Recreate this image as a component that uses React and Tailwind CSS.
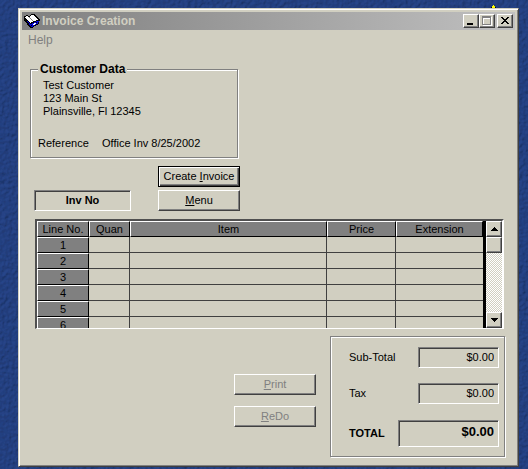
import clsx from 'clsx';

const rows = [1, 2, 3, 4, 5, 6];

const raised =
  'border border-t-white border-l-white border-r-[#404040] border-b-[#404040] shadow-[inset_-1px_-1px_#808080]';
const sunken =
  'border border-t-[#808080] border-l-[#808080] border-r-white border-b-white shadow-[inset_1px_1px_#404040]';
const etched = 'border border-[#808080] shadow-[inset_1px_1px_#fff,1px_1px_#fff]';

function Desktop() {
  return (
    <svg className="absolute inset-0 h-full w-full" aria-hidden="true">
      <filter id="plaster" x="0" y="0" width="100%" height="100%">
        <feTurbulence type="fractalNoise" baseFrequency="0.28" numOctaves="2" seed="4" />
        <feDiffuseLighting surfaceScale="1.1" lightingColor="#284489" diffuseConstant="1.05">
          <feDistantLight azimuth="225" elevation="55" />
        </feDiffuseLighting>
      </filter>
      <rect width="100%" height="100%" filter="url(#plaster)" />
    </svg>
  );
}

function BookIcon() {
  return (
    <svg width="16" height="16" viewBox="0 0 16 16" shapeRendering="crispEdges" aria-hidden="true">
      <path d="M0 3h2v-1h2v1h2v-1h1v-1h4v1h1v1h1v1h1v1h1v1h1v2h-1v3h-1v1h-2v1h-2v1h-1v1h-3v-1h-1v-1h-1v-1h-1v-2h-1v-1h-1v-1h-1v-1h-1v-2h-1z" />
      <path d="M1 4h1v-1h2v1h1v1h1v1h1v1h1v1h1v1h-2v1h-1v-1h-1v-1h-1v-1h-1v-1h-1v-1h-1z" fill="#fff" />
      <path d="M6 3h1v-1h3v1h1v1h1v1h1v1h1v1h-2v1h-3v-1h-1v-1h-1v-1h-1v-1h-1z" fill="#fff" />
      <path d="M5 4h1v1h1v1h1v1h1v1h-1v-1h-1v-1h-1v-1h-1z" fill="#808080" />
      <path d="M3 8h1v1h1v1h1v1h2v-1h2v-1h2v-1h3v1h-1v2h-2v1h-2v1h-1v1h-2v-1h-1v-1h-1v-2h-1v-1h-1z" fill="#0000e0" />
      <path d="M9 11h1v-1h2v1h-1v1h-2z" fill="#fff" />
      <path d="M12 9h1v1h-1zM7 12h1v1h-1z" />
    </svg>
  );
}

function CaptionButton({ label, children, className }) {
  return (
    <button type="button" aria-label={label} className={clsx('h-3.5 w-4', raised, className)}>
      <svg width="14" height="12" viewBox="0 0 14 12" shapeRendering="crispEdges">
        {children}
      </svg>
    </button>
  );
}

function TitleBar() {
  return (
    <header className="flex h-[18px] items-center bg-linear-to-r from-[#808080] to-[#c0c0c0] pr-0.5 pl-0.5">
      <BookIcon />
      <h1 className="ml-0.5 flex-1 text-[12px] leading-4 font-bold text-[#d1cfc1]">Invoice Creation</h1>
      <CaptionButton label="Minimize" className="bg-[#d1cfc1]">
        <path d="M3 8h6v2h-6z" />
      </CaptionButton>
      <CaptionButton label="Maximize" className="bg-[#d1cfc1]">
        <path d="M3 2h9v9h-9z" fill="#fff" />
        <path d="M2 1h9v9h-9z" fill="#808080" />
        <path d="M3 3h7v6h-7z" fill="#fff" />
        <path d="M4 4h6v5h-6z" fill="#d1cfc1" />
      </CaptionButton>
      <CaptionButton label="Close" className="ml-0.5 bg-[#d1cfc1]">
        <path d="M3 2h2v1h1v1h2v-1h1v-1h2v1h-1v1h-1v1h-1v1h1v1h1v1h1v1h-2v-1h-1v-1h-2v1h-1v1h-2v-1h1v-1h1v-1h1v-1h-1v-1h-1v-1h-1z" />
      </CaptionButton>
    </header>
  );
}

function Button({ isDefault, disabled, children }) {
  return (
    <button
      type="button"
      disabled={disabled}
      className={clsx(
        'h-[21px] w-[82px]',
        isDefault
          ? 'border border-black shadow-[inset_1px_1px_#fff,inset_-1px_-1px_#404040,inset_-2px_-2px_#808080]'
          : raised,
        disabled && 'text-[#808080]'
      )}
    >
      {children}
    </button>
  );
}

function CustomerData() {
  return (
    <fieldset className={clsx('mt-[11px] ml-2.5 w-[208px] pb-[7px]', etched)}>
      <legend className="relative ml-[7px] bg-[#d1cfc1] px-0.5 text-[12px] leading-4 font-bold">
        Customer Data
      </legend>
      <address className="mt-0.5 ml-3 not-italic">
        Test Customer
        <br />
        123 Main St
        <br />
        Plainsville, Fl 12345
      </address>
      <dl className="mt-[19px] ml-[7px] flex">
        <dt className="w-16">Reference</dt>
        <dd>Office Inv 8/25/2002</dd>
      </dl>
    </fieldset>
  );
}

function HeadCell({ children }) {
  return (
    <th
      scope="col"
      className="h-4 border-t border-r border-b border-l border-t-white border-r-black border-b-black border-l-white bg-[#808080] p-0 font-normal"
    >
      {children}
    </th>
  );
}

function ScrollBar() {
  return (
    <div className="flex w-4 shrink-0 flex-col bg-[repeating-conic-gradient(#fff_0_25%,#d1cfc1_0_50%)] bg-size-[2px_2px]">
      <button type="button" aria-label="Scroll up" className={clsx('flex h-4 items-center justify-center bg-[#d1cfc1]', raised)}>
        <svg width="7" height="4" shapeRendering="crispEdges">
          <path d="M3 0h1v1h1v1h1v1h1v1h-7v-1h1v-1h1v-1h1z" />
        </svg>
      </button>
      <div className={clsx('h-4 bg-[#d1cfc1]', raised)} />
      <button type="button" aria-label="Scroll down" className={clsx('mt-auto flex h-4 items-center justify-center bg-[#d1cfc1]', raised)}>
        <svg width="7" height="4" shapeRendering="crispEdges">
          <path d="M0 0h7v1h-1v1h-1v1h-1v1h-1v-1h-1v-1h-1v-1h-1z" />
        </svg>
      </button>
    </div>
  );
}

function LineGrid() {
  return (
    <div className="mt-2 mr-[13px] ml-[15px] flex h-[110px] overflow-hidden border-t-2 border-r-2 border-b border-l-2 border-t-[#505050] border-r-white border-b-white border-l-[#505050]">
      <div className="flex-1 border-r-[3px] border-black">
        <table className="w-full table-fixed border-separate border-spacing-0 text-center">
          <colgroup>
            <col className="w-[52px]" />
            <col className="w-[41px]" />
            <col />
            <col className="w-[69px]" />
            <col className="w-[87px]" />
          </colgroup>
          <thead>
            <tr>
              <HeadCell>Line No.</HeadCell>
              <HeadCell>Quan</HeadCell>
              <HeadCell>Item</HeadCell>
              <HeadCell>Price</HeadCell>
              <HeadCell>Extension</HeadCell>
            </tr>
          </thead>
          <tbody>
            {rows.map((n) => (
              <tr key={n}>
                <th
                  scope="row"
                  className="h-4 border border-t-white border-r-black border-b-black border-l-white bg-[#808080] p-0 font-normal"
                >
                  {n}
                </th>
                <td className="border-r border-b border-[#404040] p-0" />
                <td className="border-r border-b border-[#404040] p-0" />
                <td className="border-r border-b border-[#404040] p-0" />
                <td className="border-b border-[#404040] p-0" />
              </tr>
            ))}
          </tbody>
        </table>
      </div>
      <ScrollBar />
    </div>
  );
}

function Totals() {
  return (
    <section className={clsx('w-[175px] pt-2.5 pr-[5px] pb-[9px] pl-[18px]', etched)}>
      <div className="flex items-center justify-between">
        <label htmlFor="subtotal">Sub-Total</label>
        <input id="subtotal" readOnly value="$0.00" className={clsx('h-[21px] w-[81px] pr-1 pb-0.5 text-right', sunken)} />
      </div>
      <div className="mt-[15px] flex items-center justify-between">
        <label htmlFor="tax">Tax</label>
        <input id="tax" readOnly value="$0.00" className={clsx('h-[21px] w-[81px] pr-1 pb-0.5 text-right', sunken)} />
      </div>
      <div className="mt-4 flex items-center justify-between font-bold">
        <label htmlFor="total">TOTAL</label>
        <input
          id="total"
          readOnly
          value="$0.00"
          className={clsx('h-[27px] w-[101px] pr-1 pb-1 text-right text-[13px]', sunken)}
        />
      </div>
    </section>
  );
}

export default function App() {
  return (
    <div className="relative min-h-screen bg-[#213a76] pt-2 pr-[9px] pb-0.5 pl-[18px] font-['Liberation_Sans',Arial,sans-serif] text-[11px] leading-[13px] text-black">
      <Desktop />
      <svg className="absolute top-[5px] right-8" width="5" height="3" shapeRendering="crispEdges" aria-hidden="true">
        <path d="M1 1h3v1h1v1h-5v-1h1z" />
        <path d="M2 0h1v1h1v2h-3v-2h1z" fill="#ffff00" />
      </svg>
      <main className="relative border border-t-[#d1cfc1] border-r-[#404040] border-b-[#404040] border-l-[#d1cfc1] bg-[#d1cfc1] p-[3px] shadow-[inset_1px_1px_#fff,inset_-1px_-1px_#808080]">
        <TitleBar />
        <nav className="flex h-5 items-center pl-1.5 text-[12px]">
          <button type="button" disabled className="text-[#808080]">
            Help
          </button>
        </nav>
        <div className="-mx-0.5 pb-1.5">
          <CustomerData />
          <div className="mt-2 ml-3.5 flex items-end gap-[27px]">
            <div className={clsx('flex h-[21px] w-[97px] items-center justify-center font-bold', sunken)}>Inv No</div>
            <div className="flex flex-col gap-[3px]">
              <Button isDefault>
                Create <u>I</u>nvoice
              </Button>
              <Button>
                <u>M</u>enu
              </Button>
            </div>
          </div>
          <LineGrid />
          <div className="mt-[7px] mr-3 flex justify-end gap-3.5">
            <div className="mt-[38px] flex flex-col gap-[11px]">
              <Button disabled>
                <u>P</u>rint
              </Button>
              <Button disabled>
                <u>R</u>eDo
              </Button>
            </div>
            <Totals />
          </div>
        </div>
      </main>
    </div>
  );
}
